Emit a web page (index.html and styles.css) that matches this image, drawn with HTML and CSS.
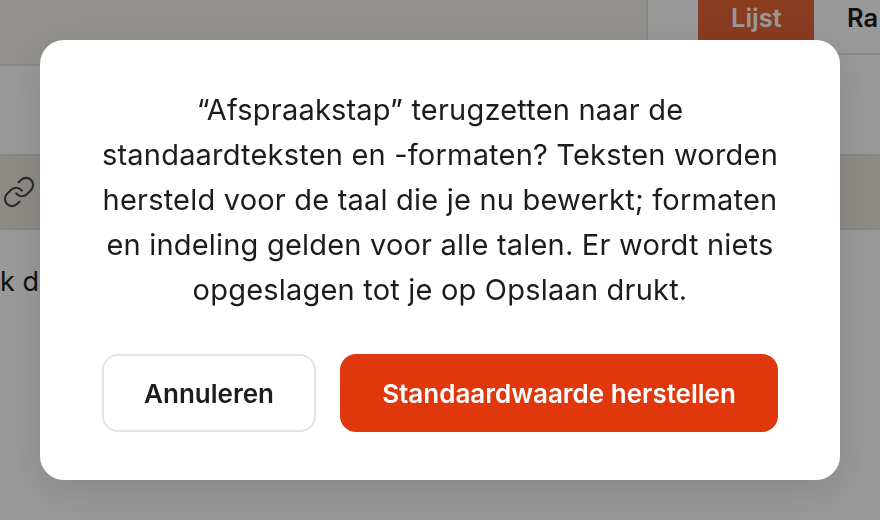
FILE: index.html
```html
<!doctype html>
<html lang="nl">
<head>
	<meta charset="UTF-8">
	<title>Afspraakstap</title>
	<link rel="stylesheet" href="styles.css">
</head>
<body>
<div class="page">
	<div class="topbar">
		<div class="topbar_left"></div>
		<div class="tabs">
			<span class="tab tab_active">Lijst</span>
			<span class="tab">Ra</span>
		</div>
	</div>
	<div class="subbar"></div>
	<div class="toolbar">
		<svg class="icon_link" viewBox="0 0 24 24" fill="none" stroke="currentColor" stroke-width="1.5" stroke-linecap="round" stroke-linejoin="round">
			<path d="M10 13a5 5 0 0 0 7.54.54l3-3a5 5 0 0 0-7.07-7.07l-1.72 1.71"/>
			<path d="M14 11a5 5 0 0 0-7.54-.54l-3 3a5 5 0 0 0 7.07 7.07l1.71-1.71"/>
		</svg>
	</div>
	<p class="content">k de link</p>
</div>

<div class="overlay">
	<div class="dialog">
		<p class="dialog_text">“Afspraakstap” terugzetten naar de standaardteksten en -formaten? Teksten worden hersteld voor de taal die je nu bewerkt; formaten en indeling gelden voor alle talen. Er wordt niets opgeslagen tot je op Opslaan drukt.</p>
		<div class="dialog_buttons">
			<button class="btn btn_cancel">Annuleren</button>
			<button class="btn btn_confirm">Standaardwaarde herstellen</button>
		</div>
	</div>
</div>
</body>
</html>
```

FILE: styles.css
```css
* {
	margin: 0;
	padding: 0;
	box-sizing: border-box;
}
html, body {
	height: 100%;
	overflow: hidden;
}
body {
	font-family: Inter, "Noto Sans", sans-serif;
	color: #1c1c1c;
	background: #fff;
}
.page {
	height: 100%;
	display: flex;
	flex-direction: column;
}
.topbar {
	height: 66px;
	display: flex;
	align-items: flex-start;
}
.topbar_left {
	flex: 1;
	height: 66px;
	background: #f5f2ec;
	border-bottom: 2px solid #e8e2da;
	border-right: 2px solid #e8e2da;
}
.tabs {
	width: 232px;
	height: 55px;
	display: flex;
	padding-left: 50px;
	border-bottom: 2px solid #e8e2da;
	overflow: hidden;
}
.tab {
	width: 116px;
	height: 53px;
	padding-left: 33px;
	font-size: 25.5px;
	font-weight: 600;
	line-height: 36px;
	flex-shrink: 0;
}
.tab_active {
	background: #e66438;
	color: #fff;
}
.subbar {
	height: 88px;
	background: #fff;
}
.toolbar {
	height: 76px;
	display: flex;
	align-items: center;
	background: #ede7df;
	border-top: 2px solid #e8e0d6;
	border-bottom: 2px solid #e8e0d6;
	padding-left: 2px;
}
.icon_link {
	color: #4a4a48;
	width: 34px;
	height: 34px;
}
.content {
	padding-top: 32px;
	font-size: 27px;
	line-height: 40px;
	white-space: nowrap;
}
.overlay {
	position: fixed;
	inset: 0;
	display: flex;
	align-items: center;
	justify-content: center;
	background: rgba(0, 0, 0, .4);
}
.dialog {
	width: 800px;
	height: 440px;
	padding: 47px 62px 48px;
	display: flex;
	flex-direction: column;
	justify-content: space-between;
	background: #fff;
	border-radius: 24px;
	box-shadow: 0 12px 44px rgba(0, 0, 0, .12);
}
.dialog_text {
	font-size: 29px;
	letter-spacing: .2px;
	line-height: 45px;
	text-align: center;
	color: #1c1c1c;
}
.dialog_buttons {
	display: flex;
	gap: 24px;
}
.btn {
	height: 78px;
	border-radius: 16px;
	font-family: inherit;
	font-size: 26px;
	font-weight: 600;
}
.btn_cancel {
	width: 214px;
	background: #fff;
	color: #1c1c1c;
	border: 2px solid #e8e2da;
}
.btn_confirm {
	flex: 1;
	background: #e0380c;
	color: #fff;
	border: 0;
}
```
